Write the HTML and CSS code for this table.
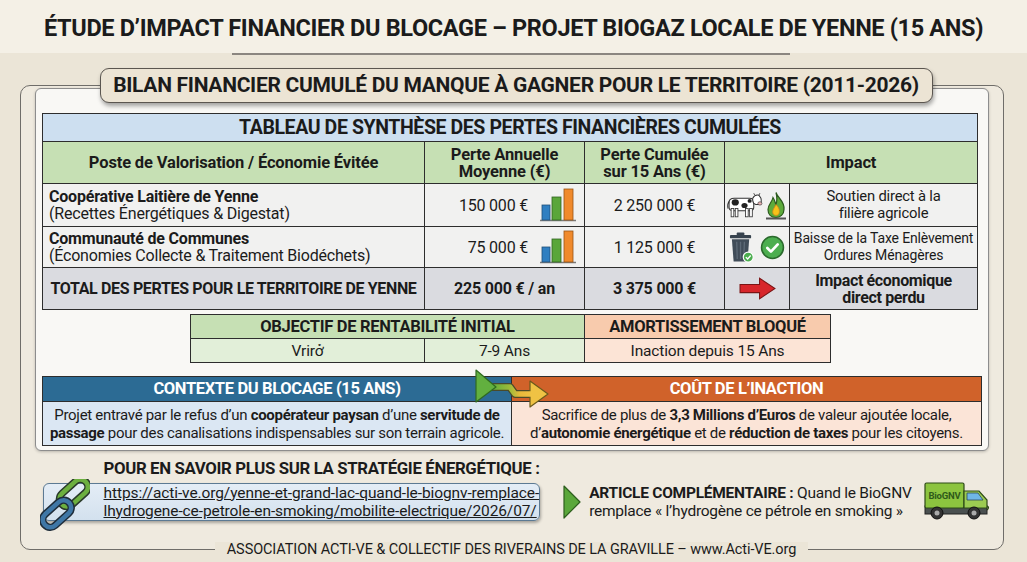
FILE: index.html
```html
<!DOCTYPE html>
<html lang="fr">
<head>
<meta charset="utf-8">
<title>Étude d'impact financier du blocage</title>
<link rel="stylesheet" href="styles.css">
</head>
<body>
<header class="top"><h1>ÉTUDE D’IMPACT FINANCIER DU BLOCAGE – PROJET BIOGAZ LOCALE DE YENNE (15 ANS)</h1></header>
<div class="rule"></div>
<section class="frame">
  <div class="pill">BILAN FINANCIER CUMULÉ DU MANQUE À GAGNER POUR LE TERRITOIRE (2011-2026)</div>
  <div class="panel">
    <table class="synth">
      <colgroup><col class="c1"><col class="c2"><col class="c3"><col class="c4"><col class="c5"></colgroup>
      <tr class="r-title"><td colspan="5">TABLEAU DE SYNTHÈSE DES PERTES FINANCIÈRES CUMULÉES</td></tr>
      <tr class="r-head">
        <td>Poste de Valorisation / Économie Évitée</td>
        <td>Perte Annuelle<br>Moyenne (€)</td>
        <td>Perte Cumulée<br>sur 15 Ans (€)</td>
        <td colspan="2">Impact</td>
      </tr>
      <tr class="r-data r1">
        <td class="poste"><b>Coopérative Laitière de Yenne</b><br>(Recettes Énergétiques &amp; Digestat)</td>
        <td><div class="annual"><span>150 000 €</span>
          <svg class="bars" viewBox="0 0 38 34"><line x1="1" y1="32.5" x2="37" y2="32.5" stroke="#7a7a7a" stroke-width="1.5"/><rect x="3" y="17" width="8" height="15" fill="#2f7fc1" stroke="#1f4f78" stroke-width=".8"/><rect x="13" y="9" width="9" height="23" fill="#5aa63a" stroke="#2f6420" stroke-width=".8"/><rect x="25" y="1" width="9" height="31" fill="#f08a2c" stroke="#9a5414" stroke-width=".8"/></svg></div></td>
        <td class="num">2 250 000 €</td>
        <td class="ico"><div class="icons">
          <svg class="cow" viewBox="0 0 36 26"><path d="M3 10 Q3 6 8 6 L23 6 Q27 6 27 10 L27 15 Q27 18 23 18 L7 18 Q3 18 3 15 Z" fill="#fff" stroke="#333" stroke-width="1"/><path d="M3 9 Q1 12 2 16" stroke="#333" fill="none" stroke-width="1"/><rect x="5" y="16" width="2.6" height="8" fill="#fff" stroke="#333" stroke-width=".8"/><rect x="9" y="16" width="2.6" height="8" fill="#fff" stroke="#333" stroke-width=".8"/><rect x="19" y="16" width="2.6" height="8" fill="#fff" stroke="#333" stroke-width=".8"/><rect x="23" y="16" width="2.6" height="8" fill="#fff" stroke="#333" stroke-width=".8"/><ellipse cx="9" cy="10" rx="3.5" ry="3" fill="#222"/><ellipse cx="18" cy="13" rx="3" ry="2.5" fill="#222"/><ellipse cx="23" cy="8.5" rx="2" ry="1.8" fill="#222"/><path d="M26 6 Q28 2 32 3 L34 6 Q35 10 33 12 L29 12 Q26 11 26 8 Z" fill="#fff" stroke="#333" stroke-width="1"/><ellipse cx="33" cy="11" rx="2" ry="1.6" fill="#e9b3b3" stroke="#333" stroke-width=".6"/><path d="M28 3 L27 1 M32 3 L33 1" stroke="#333" stroke-width=".8"/></svg>
          <svg class="flame" viewBox="0 0 24 30"><path d="M12 2 C14 8 21 11 20 19 C20 24 16 27 12 27 C7 27 4 24 4 19 C4 14 8 12 9 7 C11 10 11 12 12 14 C13 11 13 6 12 2 Z" fill="#5dab3c" stroke="#2c5a1e" stroke-width="1.2"/><path d="M12 14 C15 17 16 20 15 23 C14 25.5 10 25.5 9 23 C8 20 10 18 12 14 Z" fill="#f6c21a" stroke="#d9801a" stroke-width=".8"/><rect x="2" y="27" width="20" height="2" fill="#555"/></svg>
        </div></td>
        <td class="impact">Soutien direct à la<br>filière agricole</td>
      </tr>
      <tr class="r-data r2">
        <td class="poste"><b>Communauté de Communes</b><br>(Économies Collecte &amp; Traitement Biodéchets)</td>
        <td><div class="annual"><span>75 000 €</span>
          <svg class="bars" viewBox="0 0 38 34"><line x1="1" y1="32.5" x2="37" y2="32.5" stroke="#7a7a7a" stroke-width="1.5"/><rect x="3" y="17" width="8" height="15" fill="#2f7fc1" stroke="#1f4f78" stroke-width=".8"/><rect x="13" y="9" width="9" height="23" fill="#5aa63a" stroke="#2f6420" stroke-width=".8"/><rect x="25" y="1" width="9" height="31" fill="#f08a2c" stroke="#9a5414" stroke-width=".8"/></svg></div></td>
        <td class="num">1 125 000 €</td>
        <td class="ico"><div class="icons">
          <svg class="trash" viewBox="0 0 26 32"><rect x="8" y="0.5" width="8" height="3" rx="1" fill="#37434e"/><rect x="1" y="3" width="22" height="3.5" rx="1" fill="#37434e"/><path d="M3 7.5 L21 7.5 L19.2 30.5 L4.8 30.5 Z" fill="#414d59"/><path d="M8 10 L8.6 28 M12 10 L12 28 M16 10 L15.4 28" stroke="#5d6a77" stroke-width="1.4"/><circle cx="20" cy="26" r="5.2" fill="#4cae4f" stroke="#fff" stroke-width="1.2"/><path d="M17.5 26 L19.4 28 L22.6 24.3" stroke="#fff" stroke-width="1.4" fill="none"/></svg>
          <svg class="check" viewBox="0 0 24 24"><circle cx="12" cy="12" r="10.5" fill="#4cae4f" stroke="#2b6a2d" stroke-width="1.5"/><path d="M7 12.5 L10.5 16 L17 9" stroke="#fff" stroke-width="2.6" fill="none" stroke-linecap="round" stroke-linejoin="round"/></svg>
        </div></td>
        <td class="impact small">Baisse de la Taxe Enlèvement<br>Ordures Ménagères</td>
      </tr>
      <tr class="r-total">
        <td class="tot-label">TOTAL DES PERTES POUR LE TERRITOIRE DE YENNE</td>
        <td>225 000 € / an</td>
        <td>3 375 000 €</td>
        <td class="ico"><div class="icons"><svg class="arrow" viewBox="0 0 36 22"><polygon points="1,7 20,7 20,1 35,11 20,21 20,15 1,15" fill="#d7262b" stroke="#7a1414" stroke-width="1"/></svg></div></td>
        <td class="tot-impact">Impact économique<br>direct perdu</td>
      </tr>
    </table>

    <table class="obj">
      <colgroup><col class="o1"><col class="o2"><col class="o3"></colgroup>
      <tr class="o-head"><td colspan="2" class="green">OBJECTIF DE RENTABILITÉ INITIAL</td><td class="salmon">AMORTISSEMENT BLOQUÉ</td></tr>
      <tr class="o-data"><td class="lgreen">Vrirở</td><td class="lgreen">7-9 Ans</td><td class="lsalmon">Inaction depuis 15 Ans</td></tr>
    </table>

    <div class="context">
      <div class="ctx ctx-blue">
        <div class="ctx-head">CONTEXTE DU BLOCAGE (15 ANS)</div>
        <div class="ctx-body"><p>Projet entravé par le refus d’un <b>coopérateur paysan</b> d’une <b>servitude de</b><br><b>passage</b> pour des canalisations indispensables sur son terrain agricole.</p></div>
      </div>
      <div class="ctx ctx-orange">
        <div class="ctx-head">COÛT DE L’INACTION</div>
        <div class="ctx-body"><p>Sacrifice de plus de <b>3,3 Millions d’Euros</b> de valeur ajoutée locale,<br>d’<b>autonomie énergétique</b> et de <b>réduction de taxes</b> pour les citoyens.</p></div>
      </div>
      <svg class="connector" viewBox="0 0 76 40">
        <defs><linearGradient id="gg" x1="0" y1="0" x2="1" y2="0"><stop offset="0" stop-color="#5fae3c"/><stop offset=".45" stop-color="#9dbb3a"/><stop offset=".7" stop-color="#e8b93a"/><stop offset="1" stop-color="#efc244"/></linearGradient></defs>
        <path d="M18 19 L36 19 L41 26 L58 26" stroke="#4a4a2a" stroke-width="8" fill="none" stroke-linejoin="round"/>
        <polygon points="56,13 74,26 56,39" fill="#efc244" stroke="#6b5a1c" stroke-width="1.2" stroke-linejoin="round"/>
        <path d="M18 19 L36 19 L41 26 L58 26" stroke="url(#gg)" stroke-width="5.5" fill="none" stroke-linejoin="round"/>
        <polygon points="2,2 22,19 2,34" fill="#62b03f" stroke="#2f6a20" stroke-width="1.2" stroke-linejoin="round"/>
      </svg>
    </div>
  </div>

  <div class="more">
    <h3>POUR EN SAVOIR PLUS SUR LA STRATÉGIE ÉNERGÉTIQUE :</h3>
    <div class="links">
      <div class="linkbox">
        <svg class="chain" viewBox="0 0 50 52">
          <g transform="rotate(-42 33 14)"><rect x="17" y="7" width="33" height="15" rx="7.5" fill="none" stroke="#2a3a2a" stroke-width="7.5"/><rect x="17" y="7" width="33" height="15" rx="7.5" fill="none" stroke="#6caf3f" stroke-width="4.5"/></g>
          <g transform="rotate(-42 17 34)"><rect x="0" y="27" width="33" height="15" rx="7.5" fill="none" stroke="#1f2d3a" stroke-width="7.5"/><rect x="0" y="27" width="33" height="15" rx="7.5" fill="none" stroke="#3f77a6" stroke-width="4.5"/></g>
        </svg>
        <a class="url" href="#">https://acti-ve.org/yenne-et-grand-lac-quand-le-biognv-remplace-<br>lhydrogene-ce-petrole-en-smoking/mobilite-electrique/2026/07/</a>
      </div>
      <div class="article">
        <svg class="play" viewBox="0 0 18 34"><polygon points="1,1 17,17 1,33" fill="#5aa73a" stroke="#2d5e1d" stroke-width="1.2" stroke-linejoin="round"/></svg>
        <p><b>ARTICLE COMPLÉMENTAIRE :</b> Quand le BioGNV<br>remplace « l’hydrogène ce pétrole en smoking »</p>
        <svg class="truck" viewBox="0 0 70 40">
          <rect x="1" y="24" width="62" height="8" fill="#4a5050" stroke="#222" stroke-width="1"/>
          <rect x="1" y="1" width="39" height="25" rx="1.5" fill="#8cc43f" stroke="#2d4a18" stroke-width="1.2"/>
          <text x="20.5" y="17" text-anchor="middle" font-family="Roboto, sans-serif" font-size="9.5" font-weight="700" fill="#2f5a1a">BioGNV</text>
          <path d="M40 9 L55 9 L63 18 L63 26 L40 26 Z" fill="#9ccc52" stroke="#2d4a18" stroke-width="1.2"/>
          <path d="M43 11 L54 11 L59 18 L43 18 Z" fill="#6fb6e6" stroke="#2d4a5a" stroke-width=".8"/>
          <path d="M63 24 q3 1 0 4" stroke="#2d4a18" stroke-width="1.2" fill="none"/>
          <circle cx="13" cy="31" r="6" fill="#333" stroke="#111" stroke-width="1"/><circle cx="13" cy="31" r="2.5" fill="#aaa"/>
          <circle cx="50" cy="31" r="6" fill="#333" stroke="#111" stroke-width="1"/><circle cx="50" cy="31" r="2.5" fill="#aaa"/>
        </svg>
      </div>
    </div>
  </div>

  <footer class="foot">ASSOCIATION ACTI-VE &amp; COLLECTIF DES RIVERAINS DE LA GRAVILLE – www.Acti-VE.org</footer>
</section>
</body>
</html>
```

FILE: styles.css
```css
:root {
  --f: Roboto, "Liberation Sans", sans-serif;
  --ink: #1b1b1b;
  --line: #2d2d2d;
}
* { box-sizing: border-box; }
html, body { margin: 0; padding: 0; }
body {
  width: 1027px;
  height: 562px;
  overflow: hidden;
  background: #ebe5d7;
  font-family: var(--f);
  color: var(--ink);
  letter-spacing: -0.2px;
}
.top {
  height: 53px;
  background: #f4f0e6;
  display: flex;
  align-items: center;
  justify-content: center;
}
.top h1 {
  margin: 0;
  font-size: 23.5px;
  letter-spacing: -0.35px;
  font-weight: 700;
  padding-top: 2px;
}
.rule {
  width: 558px;
  height: 1.5px;
  background: #8b8680;
  margin-left: 232px;
}
.frame {
  position: relative;
  margin: 30.5px 0 0 20px;
  width: 984px;
  height: 465px;
  border: 1.5px solid #6f6d69;
  border-radius: 10px;
  background: #efeadf;
  padding: 1.5px 14.5px 0 13.5px;
  display: flex;
  flex-direction: column;
}
.pill {
  position: absolute;
  left: 78.5px;
  top: -18.5px;
  width: 833px;
  height: 35px;
  background: #ece4d4;
  border: 1.5px solid #5b5650;
  border-radius: 9px;
  box-shadow: 1px 3px 4px rgba(0,0,0,.35);
  font-size: 21px;
  letter-spacing: -0.3px;
  font-weight: 700;
  display: flex;
  align-items: center;
  justify-content: center;
  z-index: 2;
}
.panel {
  height: 363px;
  border: 1.5px solid #8d8d8d;
  border-radius: 6px;
  background: #f9f8f5;
  box-shadow: 0 1px 3px rgba(0,0,0,.22);
  padding: 24.5px 0 0 6.5px;
}
table { border-collapse: collapse; table-layout: fixed; }
.synth { width: 935px; }
.c1 { width: 382px; } .c2 { width: 160px; } .c3 { width: 140px; } .c4 { width: 65px; } .c5 { width: 188px; }
.synth td { border: 1.5px solid var(--line); padding: 0; text-align: center; font-size: 16px; line-height: 17px; }
.r-title td { height: 28px; background: #cddff0; font-size: 19.5px; letter-spacing: -0.4px; font-weight: 700; }
.r-head td { height: 42px; background: #c6e0b4; font-weight: 700; font-size: 16.5px; letter-spacing: -0.15px; }
.r-data td { background: #f1f1f0; }
.r1 td { height: 43px; }
.r2 td { height: 41px; }
.r-total td { height: 42px; background: #dadbe0; font-weight: 700; }
.tot-label { letter-spacing: -0.35px; }
.r-total td.tot-impact { font-size: 16px; letter-spacing: -0.35px; }
.poste { text-align: left !important; padding-left: 6px !important; }
.annual { display: flex; justify-content: flex-end; align-items: center; gap: 11px; padding-right: 7px; }
.bars { width: 38px; height: 34px; }
.icons { display: flex; align-items: center; justify-content: center; gap: 1px; }
.cow { width: 37px; height: 27px; }
.flame { width: 24px; height: 31px; }
.trash { width: 25px; height: 31px; margin-right: 5px; }
.check { width: 25px; height: 25px; }
.arrow { width: 37px; height: 23px; }
.synth td.impact { font-size: 14.8px; }
.synth td.impact.small { font-size: 14px; letter-spacing: -0.15px; }

.obj { width: 640px; margin: 4px 0 0 148px; }
.o1 { width: 234px; } .o2 { width: 160px; } .o3 { width: 246px; }
.obj td { border: 1.5px solid var(--line); height: 24px; padding: 0; text-align: center; font-size: 15.5px; letter-spacing: -0.15px; }
.obj .o-head td { font-weight: 700; font-size: 16.5px; letter-spacing: -0.3px; }
.green { background: #c6e0b4; }
.salmon { background: #f8cbad; }
.lgreen { background: #e2efd9; }
.lsalmon { background: #fce4d6; }

.context {
  position: relative;
  margin-top: 13px;
  display: grid;
  grid-template-columns: 470px 470px;
}
.ctx { border: 1.5px solid var(--line); }
.ctx-orange { border-left: none; }
.ctx-head {
  height: 25px;
  line-height: 24px;
  color: #fff;
  font-weight: 700;
  font-size: 16.5px;
  letter-spacing: -0.35px;
  text-align: center;
  border-bottom: 1.5px solid var(--line);
}
.ctx-blue .ctx-head { background: #2c6b94; }
.ctx-orange .ctx-head { background: #d0622a; }
.ctx-body {
  height: 43px;
  display: flex;
  align-items: center;
  justify-content: center;
  text-align: center;
  padding: 0 4px;
  font-size: 15px;
  letter-spacing: -0.3px;
  line-height: 18px;
  white-space: nowrap;
}
.ctx-body p { margin: 0; }
.ctx-blue .ctx-body { background: #dbe7f3; }
.ctx-orange .ctx-body { background: #fbe4d7; }
.connector {
  position: absolute;
  left: 432px;
  top: -8px;
  width: 76px;
  height: 40px;
}

.more { padding-left: 8px; margin-top: 8px; }
.more h3 {
  margin: 0 0 0 61px;
  font-size: 16.8px;
  letter-spacing: -0.35px;
  line-height: 18px;
  font-weight: 700;
}
.links { display: flex; align-items: center; margin-top: 5px; }
.linkbox {
  position: relative;
  width: 505px;
  height: 38px;
  border: 1.5px solid #5c7a93;
  border-radius: 6px;
  background: linear-gradient(#e4edf6, #d3e1ee);
  box-shadow: 1px 2px 3px rgba(0,0,0,.3);
  padding-left: 60px;
  display: flex;
  align-items: center;
}
.chain {
  position: absolute;
  left: -4px;
  top: -5px;
  width: 50px;
  height: 52px;
}
.url { color: var(--ink); font-size: 15.5px; letter-spacing: -0.1px; line-height: 18px; text-decoration: underline; white-space: nowrap; }
.article { display: flex; align-items: center; margin-left: 23px; }
.play { width: 18px; height: 34px; }
.article p { margin: 0 0 0 8px; font-size: 15.5px; letter-spacing: -0.25px; line-height: 18px; white-space: nowrap; }
.truck { width: 70px; height: 40px; margin-left: 12px; }

.foot {
  margin-top: auto;
  margin-bottom: -8.5px;
  align-self: center;
  background: #ebe5d7;
  padding: 0 12px;
  font-size: 14.5px;
  letter-spacing: -0.1px;
  line-height: 16px;
  position: relative;
}
```
